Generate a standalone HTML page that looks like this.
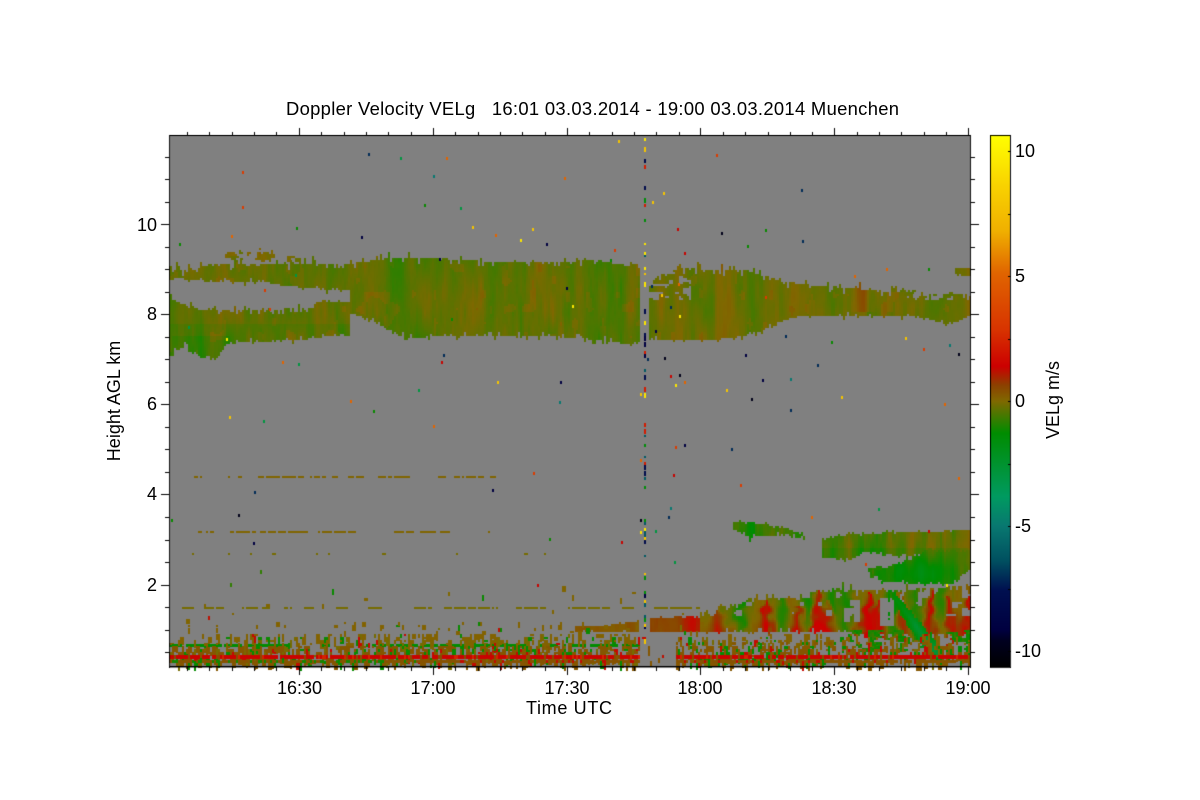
<!DOCTYPE html>
<html>
<head>
<meta charset="utf-8">
<style>
html,body{margin:0;padding:0;background:#fff;width:1200px;height:800px;overflow:hidden}
#plotbg{position:absolute;left:170px;top:135px;width:800px;height:532px;background:#808080}
#cbar{position:absolute;left:990px;top:135px;width:20px;height:532px;background:linear-gradient(to bottom,#ffff00 0,#f8d000 10%,#f0b000 18%,#e06400 26%,#d83400 36.5%,#cc0000 43.5%,#8c4000 47%,#806800 50%,#008c00 56%,#009a60 68%,#087870 73.5%,#005060 80%,#001050 85.5%,#000040 93%,#000020 95%,#000000 100%)}
canvas{position:absolute;left:0;top:0}
svg{position:absolute;left:0;top:0}
text{font-family:"Liberation Sans",sans-serif;font-size:18px;fill:#000}
</style>
</head>
<body>
<div id="plotbg"></div>
<div id="cbar"></div>
<canvas id="c" width="1200" height="800"></canvas>
<svg width="1200" height="800" viewBox="0 0 1200 800">
<text x="286" y="115" style="font-size:18.4px" textLength="613" lengthAdjust="spacing" xml:space="preserve">Doppler Velocity VELg   16:01 03.03.2014 - 19:00 03.03.2014 Muenchen</text>
<text x="299.5" y="694" text-anchor="middle">16:30</text>
<text x="433" y="694" text-anchor="middle">17:00</text>
<text x="567" y="694" text-anchor="middle">17:30</text>
<text x="700" y="694" text-anchor="middle">18:00</text>
<text x="834" y="694" text-anchor="middle">18:30</text>
<text x="968" y="694" text-anchor="middle">19:00</text>
<text x="526" y="714" textLength="86" lengthAdjust="spacing">Time UTC</text>
<text x="157" y="231" text-anchor="end">10</text>
<text x="157" y="320" text-anchor="end">8</text>
<text x="157" y="410" text-anchor="end">6</text>
<text x="157" y="500" text-anchor="end">4</text>
<text x="157" y="591" text-anchor="end">2</text>
<text transform="translate(120,401) rotate(-90)" text-anchor="middle">Height AGL km</text>
<text x="1015" y="157">10</text>
<text x="1015" y="282">5</text>
<text x="1015" y="407">0</text>
<text x="1015" y="532">-5</text>
<text x="1015" y="657">-10</text>
<text transform="translate(1059,400) rotate(-90)" text-anchor="middle">VELg m/s</text>
</svg>
<script>
var c=document.getElementById('c'),g=c.getContext('2d');
var seed=12345;
function R(){seed=(seed*1664525+1013904223)>>>0;return seed/4294967296;}
function h2(a,b){var s=Math.sin(a*127.1+b*311.7)*43758.5453;return s-Math.floor(s);}
function sm(t){return t*t*(3-2*t);}
function n2(x,y){var a=Math.floor(x),b=Math.floor(y),f=sm(x-a),e=sm(y-b);
 var p=h2(a,b),q=h2(a+1,b),r=h2(a,b+1),s=h2(a+1,b+1);
 return (p+(q-p)*f)*(1-e)+(r+(s-r)*f)*e;}
function fb(x,y){return 0.6*n2(x/10,y/50)+0.3*n2(x/4,y/24)+0.1*n2(x/2,y/8);}
var st=[[10.64,255,255,0],[8.5,248,208,0],[7,240,176,0],[5,224,100,0],[2.6,216,52,0],[1.35,204,0,0],[0.7,140,64,0],[0,128,104,0],[-1.3,0,140,0],[-3.8,0,154,96],[-5,8,120,112],[-6.3,0,80,96],[-7.5,0,16,80],[-9,0,0,64],[-10.64,0,0,0]];
function col(v){
 if(v>=st[0][0])v=st[0][0];if(v<=-10.64)v=-10.64;
 for(var i=0;i<st.length-1;i++){var A=st[i],B=st[i+1];
  if(v<=A[0]&&v>=B[0]){var t=(A[0]-v)/(A[0]-B[0]);
   return 'rgb('+Math.round(A[1]+(B[1]-A[1])*t)+','+Math.round(A[2]+(B[2]-A[2])*t)+','+Math.round(A[3]+(B[3]-A[3])*t)+')';}}
 return '#000';}
function ip(a,x){if(x<=a[0][0])return a[0][1];
 for(var i=0;i<a.length-1;i++){if(x<=a[i+1][0]){var t=(x-a[i][0])/(a[i+1][0]-a[i][0]);return a[i][1]+(a[i+1][1]-a[i][1])*t;}}
 return a[a.length-1][1];}
function put(x,y,v,w,h){if(x<170||x>=970||y<136||y>=666)return;g.fillStyle=col(v);g.fillRect(x,y,w||2,h||2);}
function layer(T,B,x0,x1,fn,jt,jb){
 for(var x=x0;x<x1;x+=2){
  var r1=R(),r2=R();
  var t=ip(T,x)-(r1<0.18?R()*(jt||6):0)+(r1>0.75?R()*(jt||6):0);
  var b=ip(B,x)+(r2<0.15?R()*(jb||5):0)-(r2>0.8?R()*(jb||5):0);
  t=Math.round(t/2)*2;b=Math.round(b/2)*2;
  for(var y=t;y<b;y+=2){var v=fn(x,y);if(v!==null)put(x,y,v);}
 }
}
function gs(x,c,w){var d=(x-c)/w;return Math.exp(-d*d);}
function mainV(x,y){
 var n=fb(x,y);
 var base=-0.32+(0.5-n)*1.0;
 base-=0.34*gs(x,395,22)+0.2*gs(x,600,18);
 if(x<350&&y>322)base-=0.16;
 if(x<230&&y>335)base-=0.2;
 var b=n2(x/7,y/14);
 if(b>0.82)base+=0.22;
 return base;
}
var tU=[[170,269],[186,271],[205,265],[230,263],[300,263],[355,263],[390,258],[430,258],[500,262],[560,262],[595,260],[638,268]];
var bU=[[170,277],[186,280],[220,282],[270,283],[285,286],[320,289],[350,291]];
layer([[170,269],[186,271],[205,265],[350,263]],bU,170,352,mainV,7,4);
layer([[225,253],[260,251],[285,255],[300,258]],[[225,260],[260,261],[300,262]],225,300,function(x,y){return n2(x/4,y/5)>0.4?mainV(x,y)+0.2:null;},4,2);
var tL=[[170,298],[182,304],[200,310],[240,311],[300,308],[340,308],[350,313]];
var bL=[[170,355],[176,350],[185,346],[195,356],[215,360],[225,345],[240,342],[300,340],[340,335],[350,337]];
layer(tL,bL,170,350,mainV,5,4);
var bM=[[350,313],[370,320],[380,325],[395,335],[410,338],[440,336],[500,336],[560,337],[600,340],[630,345],[640,342]];
layer(tU,bM,350,639,mainV,6,5);
layer([[316,302],[350,302]],[[316,315],[350,315]],316,350,mainV,2,2);
var tR=[[649,280],[660,275],[680,268],[720,270],[745,270],[780,281],[810,285],[850,288],[880,291],[920,293],[950,295],[970,293]];
var bR=[[649,340],[700,341],[730,338],[755,333],[785,320],[800,316],[900,316],[925,318],[945,325],[960,320],[970,315]];
function rV(x,y){var v=mainV(x,y)+0.1;if(y<312)v+=0.5*gs(x,862,8);return v;}
layer(tR,bR,649,970,function(x,y){
 if(x>905&&y<300&&n2(x/5,y/4)<0.5)return null;
 if(x<690&&y<300&&n2(x/5,y/4)<0.38)return null;
 return rV(x,y);},7,4);
layer([[955,268],[970,268]],[[955,275],[970,276]],955,970,mainV,1,1);
layer([[900,289],[960,294]],[[900,295],[960,298]],900,960,function(x,y){return n2(x/6,y/3)>0.55?mainV(x,y):null;},2,2);
function greenV(x,y){var n=fb(x,y);return -0.65+(0.5-n)*1.7;}
layer([[733,521],[750,522],[770,525],[790,530],[803,535]],[[733,530],[750,538],[770,535],[790,537],[803,537]],733,804,function(x,y){return greenV(x,y)-0.15;},2,4);
layer([[822,540],[830,536],[860,534],[900,532],[940,531],[970,530]],[[820,558],[850,560],[865,551],[875,553],[900,556],[925,554],[970,552]],822,970,function(x,y){return greenV(x,y)+(y<548?0.2:0);},3,3);
layer([[868,568],[880,565]],[[868,573],[880,573]],868,882,function(x,y){return greenV(x,y);},2,2);
layer([[870,572],[900,562],[915,556],[925,550],[970,550]],[[870,577],[885,582],[930,584],[950,583],[970,568]],870,970,function(x,y){var d=Math.pow((x-920)/30,2)+Math.pow((y-572)/16,2);return -0.75-1.0*Math.exp(-d)+(0.5-fb(x,y))*1.4;},3,3);
var pl=[[717,600,.8],[765,600,1.1],[797,605,.8],[817,588,1.4],[830,600,.8],[867,592,1.2],[877,600,1.0],[900,592,.8],[930,590,1.0],[950,595,.9],[967,595,.9]];
var pg=[[740,1],[780,1],[807,1],[833,1],[845,1.1],[893,1.4],[915,1],[940,.8]];
function plumeV(x,y){
 var r=0,gg=0,i,d,j=(n2(x/6,y/7)-0.5)*8;
 for(i=0;i<pl.length;i++){
  if(y<pl[i][1])continue;
  d=(x+j-pl[i][0])/Math.min(8,2+(y-pl[i][1])*0.2);
  r+=pl[i][2]*Math.exp(-d*d);}
 for(i=0;i<pg.length;i++){d=(x+j-pg[i][0])/6;gg+=pg[i][1]*Math.exp(-d*d);}
 var n=(0.5-fb(x,y))*1.0;
 var base=(y>618&&x<860)?0.35*(y-618)/14:0;
 var v=0.0+Math.min(r*1.25,1.3)+base-gg*1.05+n;
 return Math.min(v,1.4);
}
var tP=[[600,622],[638,620],[649,618],[700,612],[715,605],[735,606],[745,600],[760,600],[770,598],[790,598],[800,600],[810,592],[820,590],[830,592],[840,586],[850,590],[870,590],[900,590],[970,585]];
var bP=[[600,632],[850,632],[860,640],[880,640],[900,642],[970,640]];
layer(tP,bP,700,970,function(x,y){
 if(x>843&&x<860&&y>598&&y<622&&n2(x/6,y/6)>0.35)return null;
 if(x>878&&x<893&&y>596&&y<625&&n2(x/6,y/6)>0.3)return null;
 if(x>945&&y>600&&y<615&&n2(x/6,y/5)>0.62)return null;
 if(y>632&&n2(x/5,y/5)<0.5)return null;
 var nx=n2(x/9,y/9);
 if(y<618&&nx<0.24)return null;
 return plumeV(x,y);},6,5);
layer([[650,618],[700,616]],[[650,632],[700,632]],650,700,function(x,y){return 0.5+(x-650)*0.012+(0.5-fb(x,y))*1.2;},2,1);
layer([[575,626],[610,625],[638,621]],[[575,631],[638,632]],575,639,function(x,y){return 0.3+(0.5-fb(x,y))*0.6;},1,1);
// diagonal green wedge, soft edges
for(var y=592;y<662;y+=2){
 var t=(y-590)/70,cx=889+t*52,w=y>650?Math.max(2,7-(y-650)*0.5):3+t*7;
 for(var x=Math.floor((cx-w-4)/2)*2;x<cx+w+4;x+=2){
  var e=Math.abs(x-cx)/w;
  if(e>1&&R()<(e-1)*1.6+0.25)continue;
  var v=-1.1-(1.9*t+0.2)*Math.max(0,1-e*0.6)+(0.5-n2(x/5,y/16))*0.9;put(x,y,v);}
}
for(var x=850;x<970;x+=2){for(var y=630;y<652;y+=2){if(n2(x/6,y/4)>0.6&&!(x>905&&x<945))put(x,y,-1.0+(0.5-R())*0.6);}}
// boundary layer scatter
for(var x=170;x<970;x+=2){
 var cd=n2(x/6,1.3);
 var gap=(x>=640&&x<676);
 var dg=n2(x/14,4.2);
 if(!gap&&x<640&&dg>0.28&&R()<0.85)put(x,644,-1.3,2,3);
 for(var y=586;y<664;y+=3){
  var p=0;
  if(y<620)p=0.006;
  else if(y<632)p=0.035+(x>300?0.03:0);
  else if(y<645)p=0.22;
  else if(y<654)p=0.42;
  else p=0.5;
  if(gap)p*=0.08;
  p*=0.4+cd*1.2;
  if(x>700&&y<632)p=0;
  if(R()<p){
   var r=R(),v;
   if(y>=646)v=r<0.18?-1.25:(r<0.85?0.32:(r<0.91?1.25:-0.1));
   else if(y>=620)v=r<0.12?-1.2:(r<0.84?0.1:(r<0.88?1.25:-0.1));
   else v=r<0.12?-1.2:(r<0.85?0.05:1.2);
   var wd=R()<0.3?4:2;
   put(x,y,v,wd,2+Math.floor(R()*(y<632?5:9)));
  }
 }
 // bands
 if(!gap){
  if(x>=676&&R()<0.2)put(x,642,R()<.3?-1.2:0.3,2,3);
  if(R()<0.93)put(x,655,R()<0.8?1.32:(R()<.6?0.5:2.2),2,4);
  if(R()<0.85)put(x,660,x<420?(R()<.35?-1.1:0.38):(R()<0.85?0.38:1.25),2,3);
 }else if(R()<0.05)put(x,655,1.2,2,3);
 // dashed line layers
 if(x<700&&n2(x/11,7)>0.45&&R()<0.85)put(x,607,-0.1,2,2);
 if(x<490&&x>176&&n2(x/13,3)>0.5&&R()<0.85)put(x,531,0.05,2,2);
 if(x<495&&x>185&&n2(x/9,11)>0.5&&R()<0.8)put(x,476,0.05,2,2);
 if(x<550&&x>170&&n2(x/4,17)>0.72&&R()<0.4)put(x,553,-0.1,2,2);
 if(x<550&&x>170&&R()<0.012)put(x,570+Math.floor(R()*35),R()<.6?0:-0.8,2,4);
}
// isolated speckles
var vs=[-10,-9,-7,-5,-3,-1.2,1.3,3,5,8,9.5];
for(var i=0;i<95;i++){
 put(170+Math.floor(R()*790),136+Math.floor(R()*450),vs[Math.floor(R()*vs.length)],2,3);
}
// column of noise at 644 and around
for(var y=138;y<640;y+=3){
 if(R()<0.28)put(644,y,[9.5,8,2,-8,-6,-1.5,-9][Math.floor(R()*7)],2,2+Math.floor(R()*4));
 if(R()<0.02)put(640,y,vs[Math.floor(R()*vs.length)],2,3);
 if(R()<0.06)put(650+Math.floor(R()*35),y,vs[Math.floor(R()*vs.length)],2,3);
}
// ticks & frame
g.fillStyle='#000';
var xt=[187,209,232,254,276,299,321,344,366,388,411,433,455,478,500,522,545,567,589,612,634,656,679,700,723,745,768,790,812,834,857,879,901,924,946,968],xm=[299,433,567,700,834,968];
var yt=[157,179,202,224,247,269,292,314,337,359,382,404,427,449,472,494,517,540,562,585,607,630,652],ym=[224,314,404,494,585];
xt.forEach(function(x){var l=xm.indexOf(x)>=0?8:4;g.fillRect(x,667,1,l);g.fillRect(x,135-l+1,1,l);});
yt.forEach(function(y){var l=ym.indexOf(y)>=0?8:4;g.fillRect(169-l,y,l,1);g.fillRect(971,y,l,1);});
g.fillRect(169,135,802,1);g.fillRect(169,666,802,1.5);g.fillRect(169,135,1,533);g.fillRect(970,135,1,533);
// colourbar frame
g.fillRect(990,135,21,1);g.fillRect(990,667,21,1);g.fillRect(990,135,1,533);g.fillRect(1010,135,1,533);
for(var v=-10;v<=10;v+=2.5){var yy=Math.round(401-25*v);g.fillRect(1008,yy,2,1);}
</script>
</body>
</html>
